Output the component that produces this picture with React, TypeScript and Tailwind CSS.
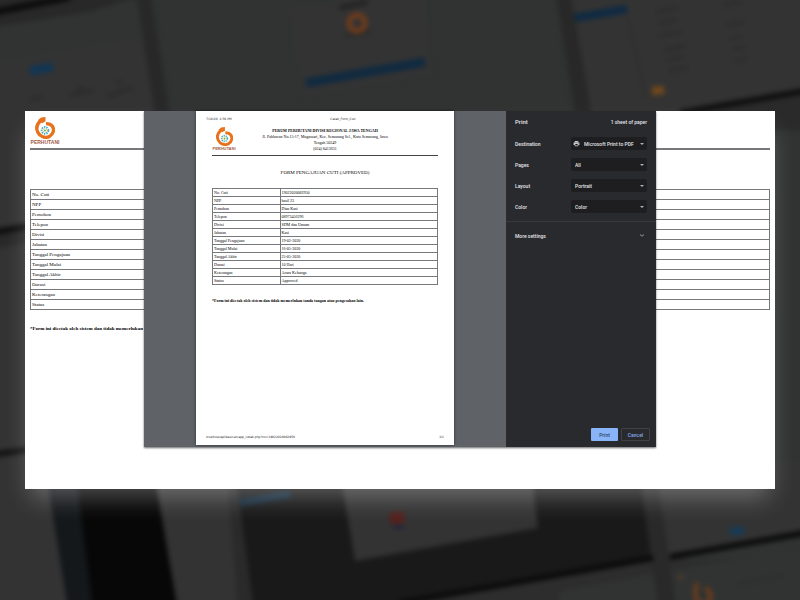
import React from "react";

const SERIF = "font-['Liberation_Serif','Times_New_Roman',serif]";

const NOTE =
  "*Form ini dicetak oleh sistem dan tidak memerlukan tanda tangan atau pengesahan lain.";

const FIELDS: [string, string][] = [
  ["No. Cuti", "19022020082950"],
  ["NPP", "hasil 23"],
  ["Pemohon", "Dian Kasi"],
  ["Telepon", "08973456296"],
  ["Divisi", "SDM dan Umum"],
  ["Jabatan", "Kasi"],
  ["Tanggal Pengajuan", "19-02-2020"],
  ["Tanggal Mulai", "16-05-2020"],
  ["Tanggal Akhir", "25-05-2020"],
  ["Durasi", "10 Hari"],
  ["Keterangan", "Acara Keluarga"],
  ["Status", "Approved"],
];

const SETTINGS: { id: string; label: string; value: string; printer?: boolean }[] = [
  { id: "destination", label: "Destination", value: "Microsoft Print to PDF", printer: true },
  { id: "pages", label: "Pages", value: "All" },
  { id: "layout", label: "Layout", value: "Portrait" },
  { id: "color", label: "Color", value: "Color" },
];

function Backdrop() {
  return (
    <svg
      aria-hidden="true"
      className="absolute inset-0 h-full w-full"
      viewBox="0 0 800 600"
      preserveAspectRatio="xMidYMid slice"
    >
      <defs>
        <filter id="soft" x="-5%" y="-5%" width="110%" height="110%" colorInterpolationFilters="sRGB">
          <feGaussianBlur stdDeviation="2.4" />
        </filter>
      </defs>
      <rect width="800" height="600" fill="#303332" />
      <g filter="url(#soft)">
        <path d="M-10 -10H140L160 120V490H-10Z" fill="#313332" />
        <path d="M-10 64L145 38L160 120V480H-10Z" fill="#333333" />
        <path d="M-10 -10H160L90 12L-10 28Z" fill="#282828" />
        <path d="M-10 13L70 -3" stroke="#0c0c0c" strokeWidth="7" />
        <path d="M136 -5H151L170 115H155Z" fill="#282828" />
        <path d="M288 8L400 -10H425L432 74L303 98Z" fill="#333333" />
        <path d="M339 8L368 2" stroke="#232323" strokeWidth="5" />
        <path d="M345 36L371 32" stroke="#292929" strokeWidth="3" />
        <circle cx="357" cy="23" r="8" stroke="#743c1a" strokeWidth="5" fill="none" />
        <path d="M306 83L425 62" stroke="#102a40" strokeWidth="9" />
        <path d="M30 71L53 67" stroke="#123654" strokeWidth="9" />
        <path d="M30 99L42 97M70 95L94 90M106 97L134 87M76 90L83 88M115 84L123 81" stroke="#2c2c2c" strokeWidth="4" />
        <path d="M571 -5H810V95L680 116H591Z" fill="#333333" />
        <path d="M556 -5H571L591 115H575Z" fill="#282828" />
        <path d="M575 18L627 9" stroke="#0e2a43" strokeWidth="8" />
        <path d="M628 17L646 100" stroke="#2e2e2e" strokeWidth="2" />
        <path d="M656 12L678 7M658 23L676 20M658 36L682 32M664 50L685 46M666 60L684 57M668 71L688 67M723 5L742 2M727 25L744 22M729 39L742 36M732 50L745 47M734 61L747 58" stroke="#2d2d2d" strokeWidth="4" />
        <path d="M652 91L664 90" stroke="#73491a" strokeWidth="8" />
        <path d="M680 116L810 94V130H680Z" fill="#2a2a2a" />
        <path d="M680 113L810 90" stroke="#0e0e0e" strokeWidth="6" />

        <path d="M-10 236L40 225V240L-10 250Z" fill="#292929" />
        <path d="M-10 233L40 224" stroke="#0d0d0d" strokeWidth="6" />
        <path d="M-10 455L40 448" stroke="#121212" strokeWidth="6" />

        <path d="M-10 462L48 450L68 610H-10Z" fill="#333333" />
        <path d="M44 460H75L93 610H68Z" fill="#14181b" />
        <path d="M74 460H152L178 610H93Z" fill="#070707" />
        <path d="M152 460H234L254 610H178Z" fill="#333333" />
        <path d="M226 460H234L254 610H238Z" fill="#2a2a2a" />
        <path d="M234 460H640L654 559L380 610H254Z" fill="#191919" />
        <path d="M338 460H530L538 528L355 561Z" fill="#333333" />
        <path d="M240 503L290 494" stroke="#142c40" strokeWidth="7" />
        <path d="M390 518H404" stroke="#54201c" strokeWidth="12" />
        <path d="M393 527H404" stroke="#20263a" strokeWidth="4" />
        <path d="M380 610L654 559H810V610Z" fill="#2d2d2d" />
        <path d="M560 592L810 545V610H560Z" fill="#313332" />
        <path d="M656 460H810V532L671 557Z" fill="#333333" />
        <path d="M638 460H654L677 610H658Z" fill="#292929" />
        <path d="M400 603L653 558M670 557L810 532" stroke="#0b0b0b" strokeWidth="6" />
        <path d="M730 532L744 530" stroke="#173b56" strokeWidth="8" />
        <path d="M737 584L785 575" stroke="#292e2d" strokeWidth="3" />
        <circle cx="681" cy="577" r="2" fill="#69421d" />
        <path d="M697 583C693 596 697 604 704 604C712 603 713 592 705 588" stroke="#743c1a" strokeWidth="4" fill="none" />
      </g>
    </svg>
  );
}

function LogoMark({ className }: { className: string }) {
  return (
    <svg aria-hidden="true" viewBox="0 0 40 46" className={className}>
      <path
        d="M11 8C3 15 1 24 5 32C9 41 20 45 29 41C38 36 40 26 35 19C32 15 28 14 22 14"
        fill="none"
        stroke="#e8721c"
        strokeWidth="7"
      />
      <path d="M5 7L12 1L21 0V9L14 13Z" fill="#e8721c" />
      <circle cx="20" cy="28" r="7" fill="none" stroke="#4aa9c9" strokeWidth="4" strokeDasharray="3 2" />
      <circle cx="20" cy="28" r="4" fill="none" stroke="#e3c62d" strokeWidth="2" strokeDasharray="2 2" />
      <circle cx="20" cy="28" r="2" fill="#5aa55a" />
    </svg>
  );
}

function LeaveDocument() {
  return (
    <div className={`px-[5px] pt-[6px] text-[5px] leading-[9px] text-black ${SERIF}`}>
      <header className="h-[33px] border-b-2 border-[#77787c]">
        <div className="flex w-[30px] flex-col items-center">
          <LogoMark className="h-[22px] w-[20px]" />
          <span className="font-['Liberation_Sans',Arial,sans-serif] text-[5px] leading-[6px] font-bold text-[#a45a4a]">
            PERHUTANI
          </span>
        </div>
      </header>
      <table className="mt-[39px] w-full border-collapse">
        <tbody>
          {FIELDS.map(([label]) => (
            <tr key={label}>
              <th scope="row" className="h-[10px] w-1/3 border border-[#77787c] p-0 pl-px text-left font-normal">
                {label}
              </th>
              <td className="border border-[#77787c] p-0" />
            </tr>
          ))}
        </tbody>
      </table>
      <p className="mt-[14px] font-bold whitespace-nowrap">{NOTE}</p>
    </div>
  );
}

function PreviewPage() {
  const meta = "font-['DejaVu_Sans',sans-serif] text-[3px] leading-[4px] text-[#222]";
  return (
    <article
      className={`flex w-[258px] flex-col bg-white px-[10px] pt-[6px] pb-[6px] text-[4px] text-black shadow-[0_0_3px_rgba(0,0,0,0.5)] ${SERIF}`}
    >
      <div className={`grid grid-cols-3 ${meta}`}>
        <span>7/10/20, 4:56 PM</span>
        <span className="col-span-2 pl-[45px]">Catak_Form_Cuti</span>
      </div>
      <div className="px-[6px]">
        <header className="flex h-[35px] border-b border-[#444] pt-[6px]">
          <div className="flex w-[24px] flex-col items-center">
            <LogoMark className="h-[19px] w-[17px]" />
            <span className="font-['Liberation_Sans',Arial,sans-serif] text-[4px] leading-[5px] font-bold text-[#a45a4a]">
              PERHUTANI
            </span>
          </div>
          <div className="flex-1 pt-px pr-[24px] text-center leading-[6px]">
            <p className="font-bold">PERUM PERHUTANI DIVISI REGIONAL JAWA TENGAH</p>
            <p>Jl. Pahlawan No.15-17, Mugassari, Kec. Semarang Sel., Kota Semarang, Jawa</p>
            <p>Tengah 50249</p>
            <p>(024) 8413631</p>
          </div>
        </header>
        <h1 className="mt-[13px] text-center text-[5px] leading-[8px]">FORM PENGAJUAN CUTI (APPROVED)</h1>
        <table className="mt-[11px] w-full table-fixed border-collapse leading-[6px]">
          <tbody>
            {FIELDS.map(([label, value]) => (
              <tr key={label}>
                <th scope="row" className="h-[8px] w-[30%] border border-[#77787c] p-0 pl-px text-left font-normal">
                  {label}
                </th>
                <td className="border border-[#77787c] p-0 pl-px">{value}</td>
              </tr>
            ))}
          </tbody>
        </table>
        <p className="mt-[13px] leading-[6px] font-bold">{NOTE}</p>
      </div>
      <div className={`mt-auto flex justify-between ${meta}`}>
        <span>localhost/aplikasicuti/app_cetak.php?no=19022020082950</span>
        <span>1/1</span>
      </div>
    </article>
  );
}

function PrinterIcon() {
  return (
    <svg
      aria-hidden="true"
      viewBox="0 0 24 24"
      className="pointer-events-none absolute top-[3px] left-[2px] h-[7px] w-[7px] fill-[#c4c7cc]"
    >
      <path d="M19 8H5a3 3 0 0 0-3 3v6h4v4h12v-4h4v-6a3 3 0 0 0-3-3zm-3 11H8v-5h8v5zm3-7a1 1 0 1 1 0-2 1 1 0 0 1 0 2zM18 3H6v4h12V3z" />
    </svg>
  );
}

function PrintSettings() {
  return (
    <form
      className="flex w-[150px] flex-col bg-[#292a2d] font-[Roboto,sans-serif] text-[5px] leading-[8px] font-medium text-[#e4e5e8]"
      onSubmit={(e) => e.preventDefault()}
    >
      <div className="flex h-[22px] items-center justify-between px-[9px]">
        <h2 className="text-[6px]">Print</h2>
        <span>1 sheet of paper</span>
      </div>
      <div className="flex flex-col gap-[8px] px-[9px] pt-[4px] pb-[8px]">
        {SETTINGS.map((s) => (
          <div key={s.id} className="flex items-center justify-between">
            <label htmlFor={s.id}>{s.label}</label>
            <div className="relative">
              <select
                id={s.id}
                className={`block h-[13px] w-[76px] appearance-none rounded-[2px] bg-[#1e1e20] text-[5px] ${s.printer ? "pl-[13px]" : "pl-[4px]"}`}
              >
                <option>{s.value}</option>
              </select>
              {s.printer && <PrinterIcon />}
              <svg
                aria-hidden="true"
                viewBox="0 0 4 2"
                className="pointer-events-none absolute top-[6px] right-[3px] h-[2px] w-[4px] fill-[#aeb1b6]"
              >
                <path d="M0 0H4L2 2Z" />
              </svg>
            </div>
          </div>
        ))}
      </div>
      <button
        type="button"
        className="flex h-[28px] items-center justify-between border-t border-[#37383c] pr-[12px] pl-[9px] text-left"
      >
        More settings
        <svg aria-hidden="true" viewBox="0 0 4 3" className="h-[3px] w-[4px] fill-none stroke-[#aeb1b6]">
          <path d="M0 0.5L2 2.2L4 0.5" strokeWidth="0.8" />
        </svg>
      </button>
      <div className="mt-auto flex justify-end gap-[3px] px-[6px] pb-[6px]">
        <button type="submit" className="h-[13px] w-[27px] rounded-[1px] bg-[#8ab4f8] text-[#2f4568]">
          Print
        </button>
        <button
          type="button"
          className="h-[13px] w-[29px] rounded-[1px] border border-[#3f4145] text-[#84abee]"
        >
          Cancel
        </button>
      </div>
    </form>
  );
}

export default function App() {
  return (
    <div className="relative flex min-h-screen items-center overflow-hidden bg-[#303332] px-[25px]">
      <Backdrop />
      <main className="relative min-h-[378px] w-full bg-white shadow-[0_14px_24px_-6px_rgba(255,255,255,0.3)]">
        <LeaveDocument />
        <div
          role="dialog"
          aria-label="Print"
          className="absolute top-0 left-1/2 flex h-[336px] w-[512px] -translate-x-1/2 shadow-[0_1px_2px_rgba(0,0,0,0.6)]"
        >
          <div className="flex flex-1 justify-center bg-[#5f6368] pb-[2px]">
            <PreviewPage />
          </div>
          <PrintSettings />
        </div>
      </main>
    </div>
  );
}
